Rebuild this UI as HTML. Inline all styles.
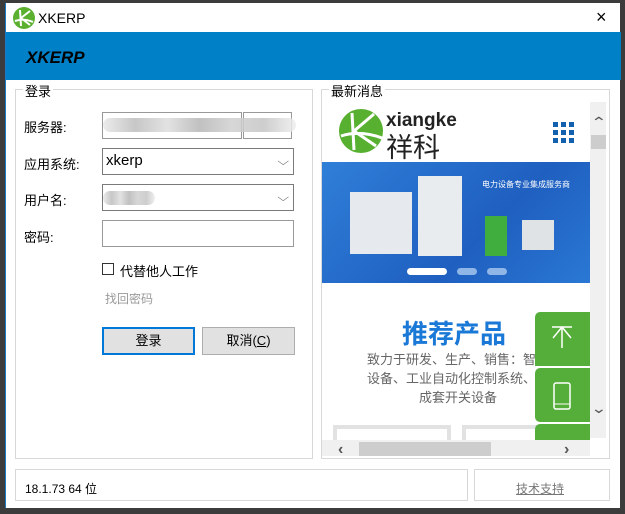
<!DOCTYPE html>
<html><head><meta charset="utf-8"><style>
*{margin:0;padding:0;box-sizing:border-box}
body{width:625px;height:514px;background:#3c3c3c;font-family:"Liberation Sans","Noto Sans CJK SC",sans-serif;font-size:13px;color:#000;position:relative;overflow:hidden}
.win{position:absolute;left:5px;top:3px;width:615px;height:505px;background:#fff;border-left:1px solid #1a7bc4}
.abs{position:absolute}
.box{position:absolute;border:1px solid #d8d8d8}
.lbl{position:absolute;background:#fff;padding:0 2px;font-size:13px}
.in{position:absolute;border:1px solid #7a7a7a;background:#fff}
.blur{position:absolute;height:14px;background:linear-gradient(90deg,#e8e8e8,#bdbdbd,#ddd,#b6b6b6,#d0d0d0,#c5c5c5,#eee);border-radius:7px;opacity:.85}
.chev{position:absolute;right:6px;top:7px;font-size:11px;color:#555;transform:scaleX(1.4)}
.btn{position:absolute;height:28px;background:#e1e1e1;border:1px solid #adadad;text-align:center;line-height:26px;font-size:13px}
</style></head><body>
<div class="win">
 <svg class="abs" style="left:6px;top:3px" width="24" height="24" viewBox="0 0 24 24"><circle cx="12" cy="12" r="11" fill="#5cb030"/><path d="M8 4 L9 20 M9 12 L18 5 M9 12 L18 19 M3 15 Q12 12 21 16" stroke="#fff" stroke-width="2" fill="none"/></svg>
 <div class="abs" style="left:32px;top:7px;font-size:14px">XKERP</div>
 <div class="abs" style="left:590px;top:4px;font-size:18px">×</div>
 <div class="abs" style="left:0;top:29px;width:615px;height:48px;background:#0080c6"></div>
 <div class="abs" style="left:20px;top:45px;font-size:17px;font-weight:bold;font-style:italic;color:#000">XKERP</div>

 <div class="box" style="left:9px;top:86px;width:298px;height:370px"></div>
 <div class="lbl" style="left:17px;top:78px">登录</div>
 <div class="abs" style="left:18px;top:114px">服务器:</div>
 <div class="in" style="left:96px;top:109px;width:140px;height:27px;border-color:#999"></div>
 <div class="in" style="left:237px;top:109px;width:49px;height:27px;border-color:#999"></div>
 <div class="blur" style="left:97px;top:115px;width:193px"></div>
 <div class="abs" style="left:18px;top:151px">应用系统:</div>
 <div class="in" style="left:96px;top:145px;width:192px;height:27px"><span class="abs" style="left:3px;top:3px;font-size:15px">xkerp</span><span class="chev">⌵</span></div>
 <div class="abs" style="left:18px;top:187px">用户名:</div>
 <div class="in" style="left:96px;top:181px;width:192px;height:27px"><span class="chev">⌵</span></div>
 <div class="blur" style="left:97px;top:188px;width:52px"></div>
 <div class="abs" style="left:18px;top:224px">密码:</div>
 <div class="in" style="left:96px;top:217px;width:192px;height:27px;border-color:#999"></div>
 <div class="abs" style="left:96px;top:260px;width:12px;height:12px;border:1px solid #333"></div>
 <div class="abs" style="left:114px;top:258px">代替他人工作</div>
 <div class="abs" style="left:99px;top:287px;color:#999;font-size:12px">找回密码</div>
 <div class="btn" style="left:96px;top:324px;width:93px;border:2px solid #0078d7;line-height:24px">登录</div>
 <div class="btn" style="left:196px;top:324px;width:93px">取消(<u>C</u>)</div>

 <div class="box" style="left:315px;top:86px;width:289px;height:370px"></div>
 <div class="lbl" style="left:323px;top:78px">最新消息</div>
 <div class="abs" style="left:314px;top:97px;width:286px;height:356px;overflow:hidden">
  <svg class="abs" style="left:18px;top:8px" width="46" height="46" viewBox="0 0 46 46"><circle cx="23" cy="23" r="22" fill="#58b030"/><path d="M14 5 L16 42 M16 23 L36 6 M16 23 L38 38 M3 28 Q22 22 44 30" stroke="#fff" stroke-width="3" fill="none"/></svg>
  <div class="abs" style="left:66px;top:10px;font-size:19px;font-weight:bold;color:#222">xiangke</div>
  <div class="abs" style="left:66px;top:26px;font-size:27px;color:#222">祥科</div>
  <svg class="abs" style="left:233px;top:22px" width="21" height="21"><g fill="#1260b0"><rect x="0" y="0" width="5" height="5"/><rect x="8" y="0" width="5" height="5"/><rect x="16" y="0" width="5" height="5"/><rect x="0" y="8" width="5" height="5"/><rect x="8" y="8" width="5" height="5"/><rect x="16" y="8" width="5" height="5"/><rect x="0" y="16" width="5" height="5"/><rect x="8" y="16" width="5" height="5"/><rect x="16" y="16" width="5" height="5"/></g></svg>
  <div class="abs" style="left:2px;top:62px;width:268px;height:121px;background:linear-gradient(135deg,#2f7fd8,#1f5fc0 60%,#2a78d4)">
   <div class="abs" style="left:28px;top:30px;width:62px;height:62px;background:#e6eaee"></div>
   <div class="abs" style="left:96px;top:14px;width:44px;height:80px;background:#e9ecee"></div>
   <div class="abs" style="left:163px;top:54px;width:22px;height:40px;background:#3fae3f"></div>
   <div class="abs" style="left:200px;top:58px;width:32px;height:30px;background:#dfe3e6"></div>
   <div class="abs" style="left:160px;top:17px;font-size:8px;color:#fff">电力设备专业集成服务商</div>
   <div class="abs" style="left:85px;top:106px;width:40px;height:7px;border-radius:4px;background:#fff"></div>
   <div class="abs" style="left:135px;top:106px;width:20px;height:7px;border-radius:4px;background:#8fb6e6"></div>
   <div class="abs" style="left:165px;top:106px;width:20px;height:7px;border-radius:4px;background:#8fb6e6"></div>
  </div>
  <div class="abs" style="left:0;top:214px;width:268px;text-align:center;font-size:26px;font-weight:bold;color:#1a78d6">推荐产品</div>
  <div class="abs" style="left:23px;top:250px;width:230px;font-size:13px;color:#666;line-height:19px;text-align:center;white-space:nowrap">致力于研发、生产、销售：智能<br>设备、工业自动化控制系统、高<br>成套开关设备</div>
  <div class="abs" style="left:13px;top:325px;width:118px;height:20px;border:4px solid #e2e2e2;border-bottom:none"></div>
  <div class="abs" style="left:142px;top:325px;width:100px;height:20px;border:4px solid #e2e2e2;border-bottom:none"></div>
  <div class="abs" style="left:215px;top:212px;width:55px;height:54px;background:#55ae3a;border-radius:5px 0 0 0"><svg width="55" height="54"><path d="M17 15 H37 M27 15 V36 M27 15 L18 26 M27 15 L36 26" stroke="#fff" stroke-width="1.5" fill="none"/></svg></div>
  <div class="abs" style="left:215px;top:268px;width:55px;height:54px;background:#55ae3a;border-radius:5px 0 0 5px"><svg width="55" height="54"><rect x="19" y="15" width="16" height="26" rx="2" stroke="#fff" stroke-width="1.5" fill="none"/><path d="M19 36 H35" stroke="#fff"/></svg></div>
  <div class="abs" style="left:215px;top:324px;width:55px;height:30px;background:#55ae3a;border-radius:5px 0 0 0"></div>
  <div class="abs" style="left:270px;top:2px;width:17px;height:336px;background:#f0f0f0"></div>
  <div class="abs" style="left:273px;top:14px;font-size:14px;color:#555;transform:scaleX(1.4)">⌃</div>
  <div class="abs" style="left:271px;top:35px;width:15px;height:14px;background:#cdcdcd"></div>
  <div class="abs" style="left:273px;top:300px;font-size:14px;color:#555;transform:scaleX(1.4)">⌄</div>
  <div class="abs" style="left:2px;top:340px;width:268px;height:17px;background:#f0f0f0"></div>
  <div class="abs" style="left:18px;top:341px;font-size:16px;font-weight:bold;color:#555">‹</div>
  <div class="abs" style="left:39px;top:342px;width:132px;height:15px;background:#cdcdcd"></div>
  <div class="abs" style="left:244px;top:341px;font-size:16px;font-weight:bold;color:#555">›</div>
 </div>

 <div class="box" style="left:9px;top:466px;width:453px;height:32px"></div>
 <div class="abs" style="left:19px;top:477px;font-size:12px">18.1.73 64 位</div>
 <div class="box" style="left:468px;top:466px;width:136px;height:32px"></div>
 <div class="abs" style="left:510px;top:477px;font-size:12px;color:#777;text-decoration:underline">技术支持</div>
</div>
</body></html>
